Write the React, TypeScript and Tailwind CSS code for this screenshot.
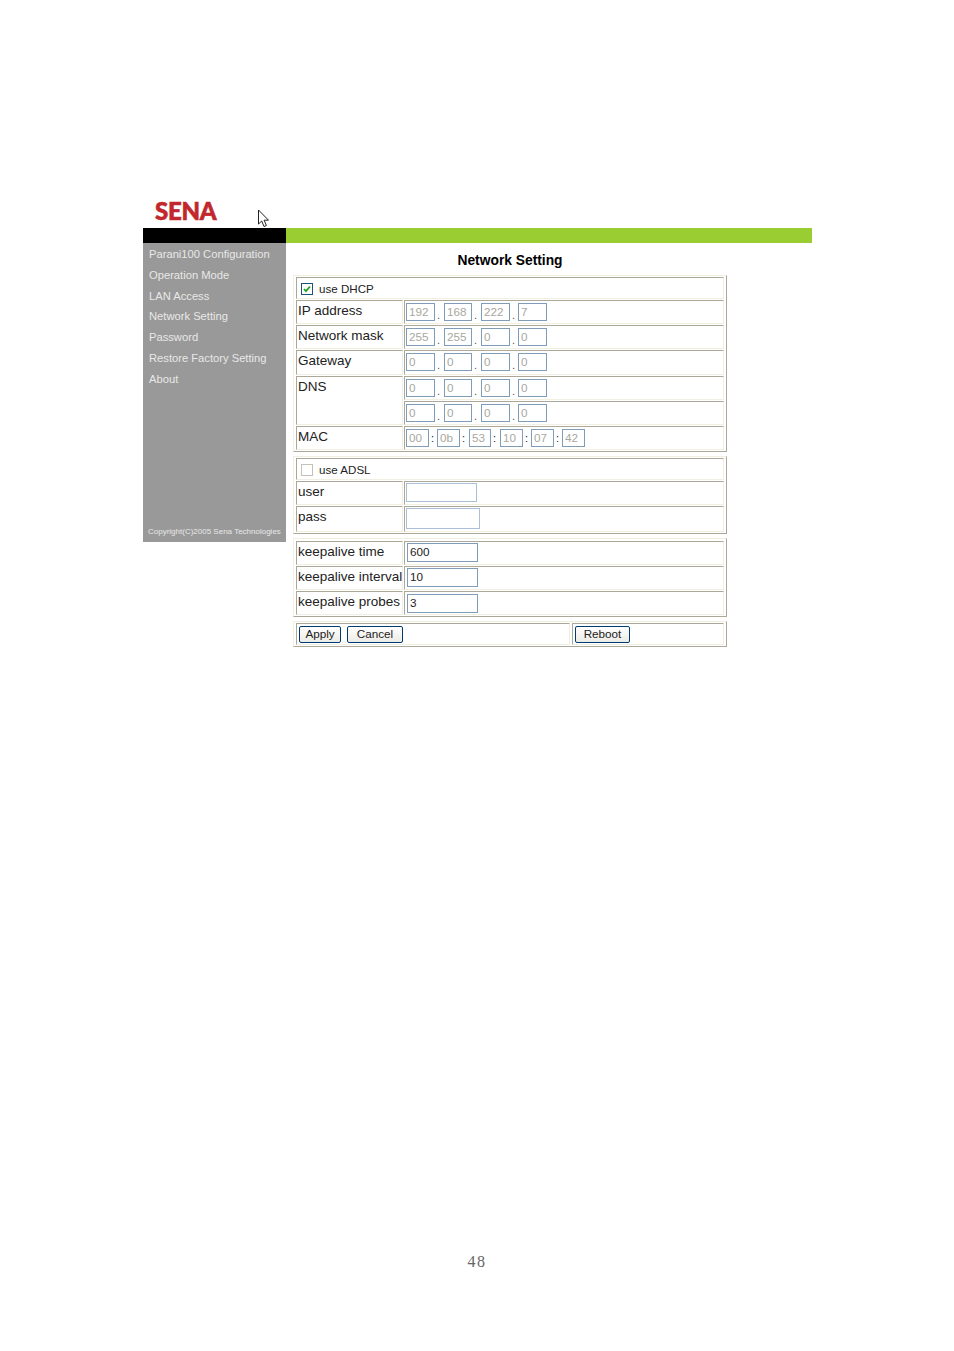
import type { ReactNode } from "react";

const menuItems = [
  "Parani100 Configuration",
  "Operation Mode",
  "LAN Access",
  "Network Setting",
  "Password",
  "Restore Factory Setting",
  "About",
];

function Cell({ className = "", children }: { className?: string; children?: ReactNode }) {
  return (
    <div
      className={`border border-t-[#aca899] border-l-[#aca899] border-r-[#f1efe2] border-b-[#f1efe2] bg-white ${className}`}
    >
      {children}
    </div>
  );
}

function Panel({ className = "", children }: { className?: string; children: ReactNode }) {
  return (
    <div
      className={`flex w-[434px] flex-col gap-[1px] border border-t-[#f1efe2] border-l-[#f1efe2] border-r-[#aca899] border-b-[#aca899] px-[2px] py-[1px] ${className}`}
    >
      {children}
    </div>
  );
}

function Label({ className = "h-[24px]", children }: { className?: string; children?: ReactNode }) {
  return (
    <Cell className={`w-[107px] shrink-0 pl-[1px] pt-[1px] text-[13.5px] leading-[17px] whitespace-nowrap ${className}`}>
      {children}
    </Cell>
  );
}

function Field({
  value,
  width = "w-[29px]",
  height = "h-[18px]",
  enabled,
  pale,
}: {
  value: string;
  width?: string;
  height?: string;
  enabled?: boolean;
  pale?: boolean;
}) {
  return (
    <div
      className={`shrink-0 border bg-white pl-[2px] text-[11.7px] leading-[15px] ${pale ? "border-[#a9c0d8]" : "border-[#7f9db9]"} ${width} ${height} ${
        enabled ? "text-[#222]" : "text-[#a8a8a0]"
      }`}
    >
      {value}
    </div>
  );
}

const ipParts = [
  { width: "w-[29px]", sep: "" },
  { width: "w-[28px]", sep: "w-[9px]" },
  { width: "w-[29px]", sep: "w-[9px]" },
  { width: "w-[29px]", sep: "w-[8px]" },
];

function IpFields({ values }: { values: string[] }) {
  return (
    <div className="flex items-start pl-[1px] pt-[2px]">
      {values.map((v, i) => (
        <div key={i} className="flex items-start">
          {i > 0 && <span className={`pt-[6px] pl-[2px] text-[11px] leading-[13px] text-[#555] ${ipParts[i].sep}`}>.</span>}
          <Field value={v} width={ipParts[i].width} />
        </div>
      ))}
    </div>
  );
}

function IpRow({ label, values, height = "h-[24px]" }: { label: string; values: string[]; height?: string }) {
  return (
    <div className="flex gap-[1px]">
      <Label className={height}>{label}</Label>
      <Cell className={`${height} flex-1`}>
        <IpFields values={values} />
      </Cell>
    </div>
  );
}

const macParts = [
  { value: "00", width: "w-[23px]", sep: "" },
  { value: "0b", width: "w-[23px]", sep: "w-[8px]" },
  { value: "53", width: "w-[22px]", sep: "w-[9px]" },
  { value: "10", width: "w-[23px]", sep: "w-[9px]" },
  { value: "07", width: "w-[23px]", sep: "w-[8px]" },
  { value: "42", width: "w-[23px]", sep: "w-[8px]" },
];

function MacRow() {
  return (
    <div className="flex gap-[1px]">
      <Label>MAC</Label>
      <Cell className="h-[24px] flex-1">
        <div className="flex items-start pl-[1px] pt-[2px]">
          {macParts.map((p, i) => (
            <div key={p.value} className="flex items-start">
              {i > 0 && <span className={`pt-[2px] pl-[2px] text-[11px] leading-[14px] text-[#222] ${p.sep}`}>:</span>}
              <Field value={p.value} width={p.width} />
            </div>
          ))}
        </div>
      </Cell>
    </div>
  );
}

function CheckRow({ label, checked }: { label: string; checked?: boolean }) {
  return (
    <Cell className="flex h-[22px] items-center gap-[6px] pl-[4px] pt-[1px] text-[11.6px]">
      <span
        className={`flex size-[12px] items-center justify-center border ${
          checked ? "border-[#1c5180]" : "border-[#c4c2b8]"
        }`}
      >
        {checked && (
          <svg width="8" height="8" viewBox="0 0 8 8" fill="none">
            <path d="M1 4l2 2.2L7 1.5" stroke="#21a121" strokeWidth="1.8" />
          </svg>
        )}
      </span>
      <span>{label}</span>
    </Cell>
  );
}

function TextRow({
  label,
  value,
  width,
  rowHeight = "h-[24px]",
  fieldHeight = "h-[19px]",
  inset = "pl-[2px] pt-[1px]",
  pale,
}: {
  label: string;
  value?: string;
  width: string;
  rowHeight?: string;
  fieldHeight?: string;
  inset?: string;
  pale?: boolean;
}) {
  return (
    <div className="flex gap-[1px]">
      <Label className={rowHeight}>{label}</Label>
      <Cell className={`${rowHeight} flex-1 ${inset}`}>
        <Field value={value ?? ""} width={width} height={fieldHeight} enabled pale={pale} />
      </Cell>
    </div>
  );
}

function XpButton({ children, width }: { children: ReactNode; width: string }) {
  return (
    <div
      className={`flex h-[17px] items-center justify-center rounded-[2px] border border-[#003c74] bg-gradient-to-b from-white to-[#ecebe5] pb-[2px] text-[11.7px] leading-[13px] ${width}`}
    >
      {children}
    </div>
  );
}

export default function App() {
  return (
    <div className="relative h-[1351px] w-[954px] bg-white font-['Liberation_Sans',Arial,sans-serif] text-[#222]">
      <div className="h-[228px] pl-[155px] pt-[194px]">
        <span className="font-['Lato',sans-serif] text-[24px] leading-[34px] font-black tracking-[-0.3px] text-[#c1272d] [-webkit-text-stroke:0.6px_#c1272d]">
          SENA
        </span>
      </div>

      {/* mouse pointer left in the capture */}
      <svg className="absolute left-[257px] top-[209px]" width="13" height="20" viewBox="0 0 13 20" fill="white" stroke="#222" strokeWidth="1">
        <path d="M1.5 1v14l3.2-3 2.3 5.5 2.4-1-2.3-5.3h4.4z" />
      </svg>

      <div className="ml-[143px] flex w-[669px]">
        <aside className="flex h-[314px] w-[143px] shrink-0 flex-col bg-[#999999]">
          <div className="h-[15px] bg-black" />
          <nav className="flex flex-col gap-[6.8px] pl-[6px] pt-[4px] text-[11.2px] leading-[14px] text-[#e8e8e8]">
            {menuItems.map((item) => (
              <div key={item}>{item}</div>
            ))}
          </nav>
          <div className="mt-auto pb-[4px] pl-[5px] text-[8px] leading-[12px] whitespace-nowrap text-[#e8e8e8]">
            Copyright(C)2005 Sena Technologies
          </div>
        </aside>

        <div className="flex-1">
          <div className="h-[15px] bg-[#9acd32]" />
          <main className="pl-[7px]">
            <h1 className="h-[32px] w-[434px] pt-[10px] text-center text-[13.8px] leading-[16px] font-bold text-black">
              Network Setting
            </h1>

            <Panel>
              <CheckRow label="use DHCP" checked />
              <IpRow label="IP address" values={["192", "168", "222", "7"]} />
              <IpRow label="Network mask" values={["255", "255", "0", "0"]} />
              <IpRow label="Gateway" values={["0", "0", "0", "0"]} height="h-[25px]" />
              <div className="flex gap-[1px]">
                <Label className="h-[49px]">DNS</Label>
                <div className="flex flex-1 flex-col gap-[1px]">
                  <Cell className="h-[24px]">
                    <IpFields values={["0", "0", "0", "0"]} />
                  </Cell>
                  <Cell className="h-[24px]">
                    <IpFields values={["0", "0", "0", "0"]} />
                  </Cell>
                </div>
              </div>
              <MacRow />
            </Panel>

            <Panel className="mt-[4px]">
              <CheckRow label="use ADSL" />
              <TextRow label="user" width="w-[71px]" inset="pl-[1px] pt-[1px]" pale />
              <TextRow label="pass" width="w-[74px]" rowHeight="h-[26px]" fieldHeight="h-[21px]" inset="pl-[1px] pt-[1px]" pale />
            </Panel>

            <Panel className="mt-[4px] !pt-[2px]">
              <TextRow label="keepalive time" value="600" width="w-[71px]" />
              <TextRow label="keepalive interval" value="10" width="w-[71px]" />
              <TextRow label="keepalive probes" value="3" width="w-[71px]" inset="pl-[2px] pt-[2px]" />
            </Panel>

            <Panel className="mt-[4px] !flex-row gap-[2px]">
              <Cell className="flex h-[22px] w-[274px] gap-[6px] pl-[2px] pt-[2px]">
                <XpButton width="w-[42px]">Apply</XpButton>
                <XpButton width="w-[56px]">Cancel</XpButton>
              </Cell>
              <Cell className="h-[22px] flex-1 pl-[2px] pt-[2px]">
                <XpButton width="w-[55px]">Reboot</XpButton>
              </Cell>
            </Panel>
          </main>
        </div>
      </div>

      <div className="absolute inset-x-0 top-[1253px] text-center font-['Liberation_Serif',serif] text-[16px] leading-[18px] tracking-[1.5px] text-[#666]">
        48
      </div>
    </div>
  );
}
